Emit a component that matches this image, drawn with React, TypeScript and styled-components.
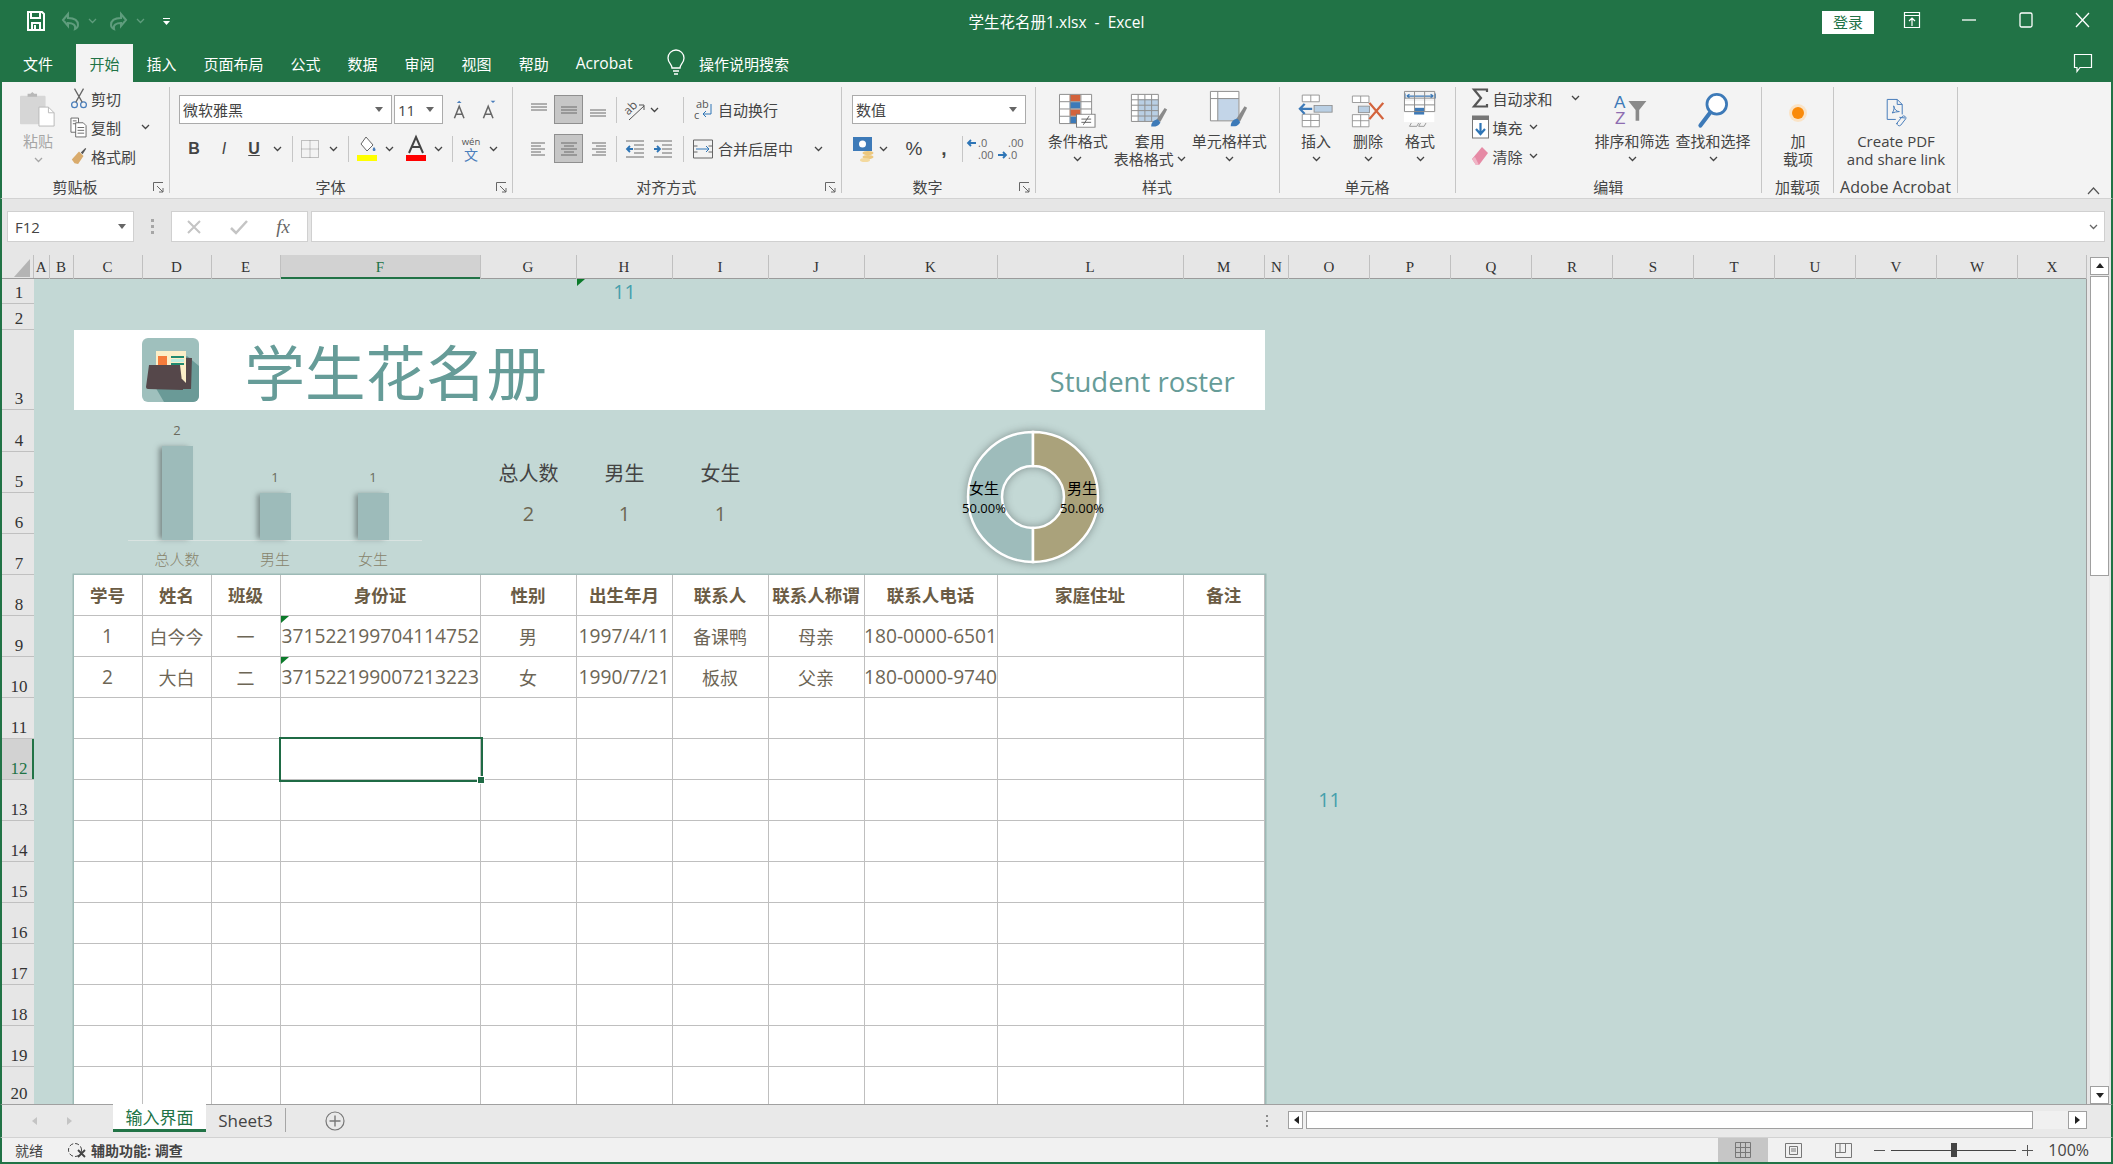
import React from 'react';
import styled, { createGlobalStyle } from 'styled-components';

const GREEN = '#217346';
const SHEET_BG = '#c3d8d5';
const INK = '#444444';

const COLS: [string, number][] = [
  ['A', 15.5], ['B', 24], ['C', 69], ['D', 69], ['E', 69], ['F', 200], ['G', 96], ['H', 96],
  ['I', 96], ['J', 96], ['K', 133], ['L', 186], ['M', 81.3], ['N', 24], ['O', 81.2], ['P', 81],
  ['Q', 81], ['R', 81], ['S', 81], ['T', 81], ['U', 81], ['V', 81], ['W', 81], ['X', 69],
];
const COL_TRACKS = COLS.map((c) => `${c[1]}px`).join(' ');
const TABLE_TRACKS = COLS.slice(2, 13).map((c) => `${c[1]}px`).join(' ');
const ROW_HEIGHTS = [25, 26, 80, 41.5, 41, 41, 41, 41, 41, 41, 41, 41, 41, 41, 41, 41, 41, 41, 41, 38];
const ROW_TRACKS = ROW_HEIGHTS.map((h) => `${h}px`).join(' ');

const TABLE_HEAD = ['学号', '姓名', '班级', '身份证', '性别', '出生年月', '联系人', '联系人称谓', '联系人电话', '家庭住址', '备注'];
const TABLE_ROWS = [
  ['1', '白今今', '一', '371522199704114752', '男', '1997/4/11', '备课鸭', '母亲', '180-0000-6501', '', ''],
  ['2', '大白', '二', '371522199007213223', '女', '1990/7/21', '板叔', '父亲', '180-0000-9740', '', ''],
];
const NUMERIC = /^[\d/-]+$/;

const GlobalStyle = createGlobalStyle`
  html, body {
    margin: 0;
    padding: 0;
    background: #f3f3f3;
  }
  body {
    font-family: "Open Sans", "Noto Sans CJK SC", sans-serif;
    overflow: hidden;
  }
  * { box-sizing: border-box; }
  svg { overflow: visible; display: block; }
`;

const Frame = styled.div`
  width: 2113px;
  height: 1164px;
  display: flex;
  flex-direction: column;
  overflow: hidden;
`;

/* title bar */
const TitleBar = styled.div`
  height: 44px;
  background: ${GREEN};
  display: grid;
  grid-template-columns: 1fr auto 1fr;
  align-items: center;
  color: #fff;
`;
const QuickAccess = styled.div`
  display: flex;
  align-items: center;
  padding-left: 26px;
  padding-bottom: 2px;
`;
const QatItem = styled.div<{ $ml: number }>`
  margin-left: ${({ $ml }) => $ml}px;
  display: flex;
`;
const DocTitle = styled.div`
  font-size: 15.5px;
  white-space: pre;
  padding-bottom: 2px;
`;
const WindowControls = styled.div`
  display: flex;
  justify-content: flex-end;
  align-items: center;
  padding-right: 2px;
`;
const LoginButton = styled.div`
  width: 52px;
  height: 23px;
  background: #fff;
  color: ${GREEN};
  font-size: 15px;
  line-height: 23px;
  text-align: center;
  margin-right: 9px;
`;
const WindowButton = styled.div`
  width: 57px;
  display: flex;
  justify-content: center;
  padding-bottom: 4px;
`;

/* ribbon tabs */
const TabBar = styled.div`
  height: 38px;
  background: ${GREEN};
  display: flex;
  align-items: stretch;
  color: #fff;
  font-size: 15px;
`;
const RibbonTab = styled.div<{ $active?: boolean; $file?: boolean }>`
  padding: 0 ${({ $file }) => ($file ? '23px' : '13.5px')};
  display: flex;
  align-items: center;
  background: ${({ $active }) => ($active ? '#f3f3f3' : 'transparent')};
  color: ${({ $active }) => ($active ? GREEN : '#fff')};
`;
const AcrobatTab = styled(RibbonTab)`
  font-size: 15.6px;
`;
const SearchTip = styled.div`
  display: flex;
  align-items: center;
  gap: 14px;
  margin-left: 21px;
`;
const CommentSlot = styled.div`
  margin-left: auto;
  width: 60px;
  display: flex;
  align-items: center;
  justify-content: center;
`;

/* ribbon */
const Ribbon = styled.div`
  height: 116px;
  background: #f3f3f3;
  border-left: 2px solid ${GREEN};
  border-right: 2px solid ${GREEN};
  padding-top: 5px;
  display: flex;
  position: relative;
  color: ${INK};
  font-size: 15px;
`;
const Group = styled.div<{ $w: number }>`
  width: ${({ $w }) => $w}px;
  height: 106px;
  border-right: 1px solid #c6c6c6;
  display: flex;
  flex-direction: column;
  flex: none;
`;
const GroupBody = styled.div<{ $pl?: number }>`
  height: 90px;
  display: flex;
  padding-left: ${({ $pl }) => $pl ?? 0}px;
`;
const GroupFoot = styled.div`
  height: 16px;
  display: flex;
`;
const GroupTitle = styled.div<{ $latin?: boolean }>`
  flex: 1;
  text-align: center;
  line-height: 20px;
  white-space: nowrap;
  font-size: ${({ $latin }) => ($latin ? '16px' : '15px')};
`;
const Launcher = styled.div`
  width: 21px;
  padding-top: 5px;
  padding-left: 5px;
`;
const PasteColumn = styled.div`
  width: 58px;
  margin-left: 7px;
  display: flex;
  flex-direction: column;
  align-items: center;
  color: #a6a6a6;
  padding-top: 3px;
`;
const PasteLabel = styled.div`
  margin-top: 2px;
  margin-bottom: 5px;
  line-height: 22px;
`;
const SmallColumn = styled.div<{ $w: number }>`
  width: ${({ $w }) => $w}px;
  display: flex;
  flex-direction: column;
  gap: 5px;
  flex: none;
  margin-top: -1px;
`;
const SmallButton = styled.div`
  height: 24px;
  display: flex;
  align-items: center;
  white-space: nowrap;
`;
const SmallIcon = styled.div`
  width: 23px;
  margin-right: 1px;
  display: flex;
  justify-content: center;
  flex: none;
`;
const Rows = styled.div<{ $pl: number }>`
  display: flex;
  flex-direction: column;
  gap: 10px;
  padding-top: 8px;
  padding-left: ${({ $pl }) => $pl}px;
`;
const ToolRow = styled.div`
  height: 29px;
  display: flex;
  align-items: center;
`;
const SelectBox = styled.div<{ $w: number; $ml?: number }>`
  width: ${({ $w }) => $w}px;
  height: 29px;
  margin-left: ${({ $ml }) => $ml ?? 0}px;
  background: #fff;
  border: 1px solid #ababab;
  display: flex;
  align-items: center;
  justify-content: space-between;
  padding: 0 8px 0 3px;
  font-size: 15px;
  flex: none;
`;
const Tool = styled.div<{ $w: number; $ml?: number; $active?: boolean }>`
  width: ${({ $w }) => $w}px;
  height: 29px;
  margin-left: ${({ $ml }) => $ml ?? 0}px;
  display: flex;
  align-items: center;
  justify-content: center;
  flex: none;
  background: ${({ $active }) => ($active ? '#c6c6c6' : 'transparent')};
  border: ${({ $active }) => ($active ? '1px solid #8f8f8f' : 'none')};
`;
const ToolGlyph = styled(Tool)<{ $bold?: boolean; $italic?: boolean; $under?: boolean; $big?: boolean }>`
  font-family: "Liberation Sans", sans-serif;
  font-size: ${({ $big }) => ($big ? '19px' : '16px')};
  font-weight: ${({ $bold, $under }) => ($bold || $under ? 700 : 400)};
  font-style: ${({ $italic }) => ($italic ? 'italic' : 'normal')};
  text-decoration: ${({ $under }) => ($under ? 'underline' : 'none')};
`;
const RowSep = styled.div<{ $ml: number; $mr: number }>`
  width: 1px;
  height: 26px;
  background: #c6c6c6;
  margin: 0 ${({ $mr }) => $mr}px 0 ${({ $ml }) => $ml}px;
  flex: none;
`;
const LabelledTool = styled.div`
  display: flex;
  align-items: center;
  gap: 5px;
  white-space: nowrap;
`;
const LargeButton = styled.div<{ $w: number }>`
  width: ${({ $w }) => $w}px;
  display: flex;
  flex-direction: column;
  align-items: center;
  flex: none;
`;
const LargeIcon = styled.div`
  height: 45px;
  padding-bottom: 4px;
  display: flex;
  align-items: flex-end;
  justify-content: center;
`;
const LargeLine = styled.div`
  height: 18px;
  line-height: 18px;
  display: flex;
  align-items: center;
  gap: 3px;
  white-space: nowrap;
`;
const CollapseArrow = styled.div`
  position: absolute;
  right: 11px;
  bottom: 3px;
`;

/* formula bar */
const FormulaBar = styled.div`
  height: 57px;
  background: #e6e6e6;
  border-left: 2px solid ${GREEN};
  border-right: 2px solid ${GREEN};
  border-top: 1px solid #d2d2d2;
  padding: 12px 6px 13px 5px;
  display: flex;
  align-items: stretch;
`;
const NameBox = styled.div`
  width: 127px;
  background: #fff;
  border: 1px solid #d0d0d0;
  display: flex;
  align-items: center;
  justify-content: space-between;
  padding: 0 7px;
  color: ${INK};
  font-size: 15px;
`;
const BarDots = styled.div`
  width: 37px;
  display: flex;
  flex-direction: column;
  align-items: center;
  justify-content: center;
  gap: 3px;
  i {
    width: 3px;
    height: 3px;
    background: #a6a6a6;
  }
`;
const FormulaTools = styled.div`
  width: 137px;
  background: #fff;
  border: 1px solid #d0d0d0;
  display: flex;
  align-items: center;
  justify-content: space-around;
  padding: 0 3px 0 0;
`;
const FormulaInput = styled.div`
  flex: 1;
  margin-left: 3px;
  background: #fff;
  border: 1px solid #d0d0d0;
  display: flex;
  align-items: center;
  justify-content: flex-end;
  padding-right: 6px;
`;

/* workspace */
const Workspace = styled.div`
  height: 849px;
  background: #e6e6e6;
  border-left: 2px solid ${GREEN};
  border-right: 2px solid ${GREEN};
  display: flex;
`;
const GridPane = styled.div`
  width: 2085px;
  display: flex;
  flex-direction: column;
`;
const HeaderStrip = styled.div`
  height: 24px;
  display: flex;
  border-bottom: 1px solid #9b9b9b;
  flex: none;
`;
const Corner = styled.div`
  width: 32px;
  display: flex;
  align-items: flex-end;
  justify-content: flex-end;
  padding: 0 3px 1px 0;
  border-right: 1px solid #c0c0c0;
`;
const ColumnHeaders = styled.div`
  display: grid;
  grid-template-columns: ${COL_TRACKS};
`;
const ColumnHeader = styled.div<{ $selected: boolean }>`
  font-family: "Liberation Serif", serif;
  font-size: 15px;
  line-height: 24px;
  text-align: center;
  color: ${({ $selected }) => ($selected ? GREEN : '#333')};
  border-right: 1px solid #c0c0c0;
  background: ${({ $selected }) => ($selected ? '#d2d2d2' : 'transparent')};
  box-shadow: ${({ $selected }) => ($selected ? `inset 0 -2px 0 ${GREEN}` : 'none')};
`;
const SheetArea = styled.div`
  display: flex;
  flex: 1;
  min-height: 0;
`;
const RowHeaders = styled.div`
  width: 32px;
  display: flex;
  flex-direction: column;
  overflow: hidden;
`;
const RowHeader = styled.div<{ $h: number; $selected: boolean }>`
  height: ${({ $h }) => $h}px;
  flex: none;
  font-family: "Liberation Serif", serif;
  font-size: 17px;
  line-height: 20px;
  display: flex;
  align-items: flex-end;
  justify-content: center;
  padding-left: 2px;
  color: ${({ $selected }) => ($selected ? GREEN : '#333')};
  border-bottom: 1px solid #c0c0c0;
  background: ${({ $selected }) => ($selected ? '#d2d2d2' : 'transparent')};
  box-shadow: ${({ $selected }) => ($selected ? `inset -2px 0 0 ${GREEN}` : 'none')};
`;
const Sheet = styled.div`
  width: 2053px;
  height: 825px;
  background: ${SHEET_BG};
  border-right: 1px solid #9f9f9f;
  display: grid;
  grid-template-columns: ${COL_TRACKS};
  grid-template-rows: ${ROW_TRACKS};
  overflow: hidden;
`;
const NoteNumber = styled.div<{ $col: number; $row: number }>`
  grid-column: ${({ $col }) => $col};
  grid-row: ${({ $row }) => $row};
  display: flex;
  align-items: center;
  justify-content: center;
  color: #45a0ac;
  font-size: 19.5px;
  line-height: 22px;
  position: relative;
`;
const CommentMark = styled.i`
  position: absolute;
  left: 0;
  top: 0;
  border-style: solid;
  border-width: 7px 8px 0 0;
  border-color: #0b7a2a transparent transparent transparent;
`;
const Banner = styled.div`
  grid-column: 3 / 14;
  grid-row: 3;
  background: #fff;
  display: flex;
  align-items: center;
  padding: 0 30px 0 68px;
  color: #669c98;
`;
const BannerTitle = styled.div`
  font-size: 60.5px;
  font-weight: 400;
  margin-left: 46px;
  white-space: nowrap;
`;
const BannerSub = styled.div`
  font-size: 27.5px;
  margin-left: auto;
  align-self: flex-end;
  padding-bottom: 3px;
  line-height: 50px;
  font-weight: 400;
`;
const StatLabel = styled.div<{ $col: number }>`
  grid-column: ${({ $col }) => $col};
  grid-row: 5;
  display: flex;
  align-items: center;
  justify-content: center;
  font-size: 20px;
  color: #444;
`;
const StatValue = styled(StatLabel)`
  grid-row: 6;
  color: #6d6753;
`;
const BarChart = styled.div`
  grid-column: 3 / 7;
  grid-row: 4 / 8;
  padding: 0 0 0 54.5px;
  display: flex;
  flex-direction: column;
`;
const Plot = styled.div`
  width: 294px;
  height: 131px;
  display: flex;
  border-bottom: 1px solid #d9e3e1;
`;
const PlotColumn = styled.div`
  flex: 1;
  display: flex;
  flex-direction: column;
  align-items: center;
  justify-content: flex-end;
`;
const BarValue = styled.div`
  font-size: 13px;
  line-height: 16px;
  padding-bottom: 8px;
  color: #6a6a5c;
`;
const Bar = styled.div<{ $h: number }>`
  width: 31px;
  height: ${({ $h }) => $h}px;
  background: #9dbbba;
  box-shadow: -4px 0 5px -1px rgba(70, 80, 80, 0.55);
`;
const AxisLabels = styled.div`
  width: 294px;
  display: flex;
  padding-top: 7px;
`;
const AxisLabel = styled.div`
  flex: 1;
  text-align: center;
  font-size: 15px;
  font-weight: 300;
  line-height: 22px;
  color: #87836b;
`;
const DonutSlot = styled.div`
  grid-column: 11 / 13;
  grid-row: 4 / 8;
  padding: 12px 0 0 78.5px;
`;
const DonutRings = styled.g`
  filter: drop-shadow(0 0 4px rgba(50, 60, 60, 0.45));
`;
const DonutText = styled.text`
  font-size: 15px;
  text-anchor: middle;
  fill: #000;
`;
const DonutPercent = styled(DonutText)`
  font-size: 13px;
`;
const RosterTable = styled.div`
  grid-column: 3 / 14;
  grid-row: 8 / 21;
  background: #fff;
  display: grid;
  grid-template-columns: ${TABLE_TRACKS};
  grid-auto-rows: 41px;
  box-shadow: 0 0 0 1.5px #9dbab6;
`;
const HeadCell = styled.div`
  border-right: 1px solid #bfbfbf;
  border-bottom: 1px solid #bfbfbf;
  display: flex;
  align-items: center;
  justify-content: center;
  font-size: 17.5px;
  font-weight: 700;
  color: #6b5c45;
  white-space: nowrap;
`;
const DataCell = styled.div<{ $flag?: boolean; $numeric?: boolean; $selected?: boolean }>`
  position: relative;
  border-right: 1px solid #bfbfbf;
  border-bottom: 1px solid #bfbfbf;
  display: flex;
  align-items: center;
  justify-content: ${({ $flag }) => ($flag ? 'flex-start' : 'center')};
  padding-left: ${({ $flag }) => ($flag ? '1px' : '0')};
  font-size: ${({ $numeric }) => ($numeric ? '19.2px' : '18px')};
  font-weight: 400;
  color: #6d6656;
  white-space: nowrap;
  outline: ${({ $selected }) => ($selected ? `2px solid #1f6b45` : 'none')};
  z-index: ${({ $selected }) => ($selected ? 2 : 0)};
`;
const FillHandle = styled.i`
  position: absolute;
  right: -4px;
  bottom: -4px;
  width: 6px;
  height: 6px;
  background: #1f6b45;
  outline: 1px solid #fff;
`;
const ScrollRail = styled.div`
  width: 19px;
  margin-left: 3px;
  padding-top: 2px;
  display: flex;
  flex-direction: column;
  background: linear-gradient(#e6e6e6 22px, #f0f0f0 22px);
  flex: none;
`;
const ScrollButton = styled.div`
  height: 18px;
  background: #fff;
  border: 1px solid #a0a0a0;
  display: flex;
  align-items: center;
  justify-content: center;
  flex: none;
`;
const VerticalThumb = styled.div`
  height: 300px;
  margin-top: 1px;
  background: #fff;
  border: 1px solid #a0a0a0;
`;
const RailSpacer = styled.div`
  flex: 1;
`;

/* sheet tabs */
const TabsBar = styled.div`
  height: 33px;
  background: #e9e9e9;
  border-left: 2px solid ${GREEN};
  border-right: 2px solid ${GREEN};
  border-top: 1px solid #a0a0a0;
  display: flex;
  align-items: flex-start;
  padding-right: 24px;
`;
const TabNav = styled.div`
  width: 111px;
  height: 31px;
  display: flex;
  align-items: center;
  gap: 24px;
  padding-left: 28px;
`;
const SheetTab = styled.div<{ $active?: boolean; $w: number }>`
  width: ${({ $w }) => $w}px;
  height: ${({ $active }) => ($active ? '28px' : '24px')};
  margin-top: ${({ $active }) => ($active ? '-1px' : '3px')};
  background: ${({ $active }) => ($active ? '#fff' : 'transparent')};
  color: ${({ $active }) => ($active ? '#217346' : '#444')};
  border-bottom: ${({ $active }) => ($active ? `3px solid ${GREEN}` : 'none')};
  border-right: ${({ $active }) => ($active ? 'none' : '1px solid #a6a6a6')};
  font-size: 17px;
  display: flex;
  align-items: center;
  justify-content: center;
  flex: none;
`;
const AddSheet = styled.div`
  margin-left: 39px;
  margin-top: 6px;
  display: flex;
`;
const TabDots = styled(BarDots)`
  width: 20px;
  height: 31px;
  margin-left: auto;
  i {
    width: 2px;
    height: 2px;
    background: #8c8c8c;
  }
`;
const HorizontalScroll = styled.div`
  display: flex;
  margin-top: 6px;
  width: 799px;
  margin-left: 11px;
  background: #f0f0f0;
`;
const HScrollButton = styled(ScrollButton)<{ $w: number }>`
  width: ${({ $w }) => $w}px;
`;
const HorizontalThumb = styled.div`
  width: 727px;
  margin-left: 3px;
  height: 18px;
  background: #fff;
  border: 1px solid #a0a0a0;
`;
const HGap = styled.div`
  flex: 1;
`;

/* status bar */
const StatusBar = styled.div`
  height: 27px;
  background: #f1f1f1;
  border-left: 2px solid ${GREEN};
  border-right: 2px solid ${GREEN};
  border-bottom: 2px solid ${GREEN};
  border-top: 1px solid #d2d2d2;
  display: flex;
  align-items: stretch;
  color: #444;
  font-size: 14px;
  padding-left: 13px;
`;
const StatusText = styled.div<{ $bold?: boolean; $ml?: number }>`
  display: flex;
  align-items: center;
  gap: 4px;
  font-weight: ${({ $bold }) => ($bold ? 700 : 400)};
  margin-left: ${({ $ml }) => $ml ?? 0}px;
`;
const ViewGroup = styled.div`
  margin-left: auto;
  display: flex;
`;
const ViewButton = styled.div<{ $active?: boolean }>`
  width: 50px;
  display: flex;
  align-items: center;
  justify-content: center;
  background: ${({ $active }) => ($active ? '#c6c6c6' : 'transparent')};
`;
const ZoomControl = styled.div`
  width: 159px;
  margin-left: 6px;
  display: flex;
  align-items: center;
  gap: 6px;
  color: #555;
`;
const ZoomSign = styled.div`
  width: 11px;
  height: 1px;
  background: #555;
  position: relative;
  flex: none;
`;
const ZoomPlus = styled(ZoomSign)`
  &::after {
    content: '';
    position: absolute;
    left: 5px;
    top: -5px;
    width: 1px;
    height: 11px;
    background: #555;
  }
`;
const ZoomTrack = styled.div`
  width: 125px;
  height: 1px;
  background: #444;
  position: relative;
  flex: none;
`;
const ZoomThumb = styled.i`
  position: absolute;
  left: 60px;
  top: -7px;
  width: 6px;
  height: 14px;
  background: #444;
`;
const ZoomValue = styled.div`
  width: 78px;
  text-align: right;
  padding-right: 22px;
  font-size: 16px;
  line-height: 25px;
`;

/* icons */
const Chev = ({ c = '#444' }: { c?: string }) => (
  <svg width="9" height="6" viewBox="0 0 9 6"><path d="M1 1l3.5 3.5L8 1" fill="none" stroke={c} strokeWidth="1.3" /></svg>
);
const Drop = () => (
  <svg width="8" height="5" viewBox="0 0 8 5"><path d="M0 0h8L4 5z" fill="#666" /></svg>
);
const LaunchIcon = () => (
  <svg width="11" height="11" viewBox="0 0 11 11"><path d="M.5 9V.5H10M4 4l6 6M10 6v4H6" fill="none" stroke="#666" /></svg>
);
const AlignLines = ({ lines }: { lines: [number, number, number][] }) => (
  <svg width="22" height="18" viewBox="0 0 22 18">
    {lines.map(([a, b, y]) => <path key={`${a}${y}`} d={`M${a} ${y}H${b}`} stroke="#6b6b6b" />)}
  </svg>
);
const SaveIcon = () => (
  <svg width="20" height="22" viewBox="0 0 20 22"><path d="M2 2h14l2 2v16H2zM5 2v6h9V2M6 20v-7h8v7M9 15v5" fill="none" stroke="#fff" strokeWidth="2" /></svg>
);
const UndoIcon = ({ flip }: { flip?: boolean }) => (
  <svg width="20" height="20" viewBox="0 0 20 20" style={flip ? { transform: 'scaleX(-1)' } : undefined}>
    <path d="M2 9l5-6v4c6 0 10 2 10 7 0 2-1 3-3 4 1-4-2-6-7-6v3z" fill="none" stroke="#5f9d7d" strokeWidth="2" />
  </svg>
);
const ScissorsIcon = () => (
  <svg width="18" height="23" viewBox="0 0 20 24">
    <circle cx="5" cy="19" r="3.2" fill="none" stroke="#4a7ebb" strokeWidth="1.4" />
    <circle cx="15" cy="19" r="3.2" fill="none" stroke="#4a7ebb" strokeWidth="1.4" />
    <path d="M6.500 16L15 1M13.500 16L5 1" stroke="#666" strokeWidth="1.4" />
  </svg>
);
const CopyIcon = () => (
  <svg width="17" height="21" viewBox="0 0 18 22" fill="#fff" stroke="#666">
    <path d="M1 1h8v15H1zM3 4h4M3 7h4" />
    <path d="M6 6h8l3 3v12H6zM8 11h7M8 14h7M8 17h7" />
  </svg>
);
const BrushIcon = () => (
  <svg width="18" height="20" viewBox="0 0 20 22">
    <path d="M2 15L10 6l5 5-6 9-4-1z" fill="#d9ab6c" />
    <path d="M12 7l5-5 1 1-4 6z" fill="#555" />
  </svg>
);
const PasteIcon = () => (
  <svg width="36" height="38" viewBox="0 0 38 38">
    <rect x="0" y="5" width="27" height="30" rx="1" fill="#d6d6d6" />
    <path d="M8 6V3h3l2-2 2 2h3v3z" fill="#b8b8b8" />
    <path d="M20 17h10l6 6v14H20z" fill="#fff" stroke="#b8b8b8" />
    <path d="M30 17v6h6" fill="none" stroke="#b8b8b8" />
  </svg>
);
const GrowFont = ({ up }: { up: boolean }) => (
  <svg width="16" height="21" viewBox="0 0 20 24">
    <path d="M3 23L9 8l6 15M5 18h8" fill="none" stroke="#666" strokeWidth="1.900" />
    <path d={up ? 'M6 4l3-3 3 3z' : 'M12 1h6l-3 3z'} fill="#4a7ebb" />
  </svg>
);
const BorderIcon = () => (
  <svg width="18" height="18" viewBox="0 0 18 18"><path d="M.5.5h17v17H.5zM9 .5v17M.5 9h17" fill="none" stroke="#8a8a8a" strokeDasharray="1 1" /></svg>
);
const FillIcon = () => (
  <svg width="22" height="26" viewBox="0 0 22 26">
    <path d="M10 1l7 8-6 6-6-7z" fill="#fff" stroke="#666" />
    <path d="M18 11c2 2 2 4 0 4-1.500 0-2-2 0-4z" fill="#4a7ebb" />
    <rect x="1" y="19" width="20" height="6" fill="#ffff00" />
  </svg>
);
const FontColorIcon = () => (
  <svg width="22" height="26" viewBox="0 0 22 26">
    <path d="M4 17L11 1l7 16M6.500 11h9" fill="none" stroke="#444" strokeWidth="2" />
    <rect x="1" y="19" width="20" height="6" fill="#ff0000" />
  </svg>
);
const PinyinIcon = () => (
  <svg width="26" height="36" viewBox="-2 -5 26 36">
    <text x="11" y="9" fontSize="9.500" textAnchor="middle" fill="#555">wén</text>
    <text x="11" y="24" fontSize="14" textAnchor="middle" fill="#4a7ebb">文</text>
  </svg>
);
const OrientIcon = () => (
  <svg width="32" height="32" viewBox="-4 -4 32 32">
    <text x="2" y="14" fontSize="12" fill="#555" transform="rotate(-45 8 12)">ab</text>
    <path d="M6 22L21 8M16 7h5v5" fill="none" stroke="#555" />
  </svg>
);
const IndentIcon = ({ right }: { right?: boolean }) => (
  <svg width="20" height="18" viewBox="0 0 20 18">
    <path d="M1 1h18M9 5h10M9 9h10M9 13h10M1 17h18" stroke="#6b6b6b" />
    <path d={right ? 'M1 9h5M4 6l3 3-3 3' : 'M8 9H2M5 6L2 9l3 3'} fill="none" stroke="#2e75b6" strokeWidth="1.800" />
  </svg>
);
const WrapIcon = () => (
  <svg width="20" height="32" viewBox="0 -4 20 32">
    <text x="3" y="10" fontSize="11" fill="#555">ab</text>
    <text x="1" y="21" fontSize="11" fill="#555">c</text>
    <path d="M18 6v10H10M13 13l-3 3 3 3" fill="none" stroke="#2e75b6" />
  </svg>
);
const MergeIcon = () => (
  <svg width="20" height="20" viewBox="0 0 20 20">
    <path d="M.5 1h19v18H.5zM.5 7h4M.5 13h4M15.500 7h4M15.500 13h4" fill="none" stroke="#666" />
    <path d="M3 10h13M13 7l3 3-3 3" fill="none" stroke="#2e75b6" />
  </svg>
);
const MoneyIcon = () => (
  <svg width="22" height="26" viewBox="0 0 22 26">
    <rect x="0" y="1" width="19" height="14" fill="#3d7ab8" />
    <circle cx="9.500" cy="8" r="3.500" fill="#fff" />
    <ellipse cx="15" cy="17" rx="5.500" ry="2" fill="#edc87e" />
    <ellipse cx="15" cy="21" rx="5.500" ry="2" fill="#edc87e" />
    <ellipse cx="12" cy="24" rx="5" ry="2" fill="#f3d99e" />
  </svg>
);
const DecimalIcon = ({ more }: { more?: boolean }) => (
  <svg width="30" height="32" viewBox="0 -4 30 32">
    <text x="12" y="10" fontSize="11" fill="#666">{more ? '.0' : '.00'}</text>
    <text x="12" y="22" fontSize="11" fill="#666">{more ? '.00' : '.0'}</text>
    <path d={more ? 'M10 6H2M5 3L2 6l3 3' : 'M2 18h8M7 15l3 3-3 3'} fill="none" stroke="#2e75b6" strokeWidth="1.800" />
  </svg>
);
const TableGrid = ({ w, h, cw, ch }: { w: number; h: number; cw: number; ch: number }) => {
  const lines: string[] = [];
  for (let x = 0.5; x <= w + 0.5; x += cw) lines.push(`M${x} .5V${h + 0.5}`);
  for (let y = 0.5; y <= h + 0.5; y += ch) lines.push(`M.5 ${y}H${w + 0.5}`);
  return <path d={lines.join('')} fill="none" stroke="#8f8f8f" vectorEffect="non-scaling-stroke" />;
};
const CondFormatIcon = () => (
  <svg width="37" height="34" viewBox="0 0 38 42" preserveAspectRatio="none">
    <rect width="34" height="36" fill="#fff" />
    <rect x="11" y="1" width="11" height="8" fill="#d3633c" />
    <rect x="11" y="10" width="11" height="8" fill="#3d7ab8" />
    <rect x="11" y="19" width="11" height="8" fill="#d3633c" />
    <rect x="11" y="28" width="11" height="8" fill="#3d7ab8" />
    <TableGrid w={33} h={36} cw={11} ch={9} />
    <rect x="18" y="25" width="19" height="16" fill="#fff" stroke="#777" />
    <path d="M25 38l6-11M23 31h10M23 35h10" stroke="#555" fill="none" />
  </svg>
);
const BrushOver = () => (
  <g>
    <path d="M30 34l10-16 3 2-8 16z" fill="#8a8a8a" />
    <path d="M24 42c0-6 4-9 8-9l3 4c-1 3-4 5-6 5z" fill="#3d7ab8" />
  </g>
);
const TableFormatIcon = () => (
  <svg width="37" height="34" viewBox="0 0 44 44" preserveAspectRatio="none">
    <rect width="33" height="35" fill="#fff" />
    <rect x="9" y="7" width="24" height="28" fill="#b9cfe4" />
    <TableGrid w={32} h={35} cw={8} ch={7} />
    <BrushOver />
  </svg>
);
const CellStyleIcon = () => (
  <svg width="38" height="37" viewBox="0 0 44 44" preserveAspectRatio="none">
    <rect width="33" height="35" fill="#fff" />
    <rect x="9" y="9" width="24" height="26" fill="#c3d5e8" />
    <path d="M.5.5h33v35H.5zM9 .5v35M.5 9h33" fill="none" stroke="#8f8f8f" vectorEffect="non-scaling-stroke" />
    <BrushOver />
  </svg>
);
const InsertIcon = () => (
  <svg width="36" height="35" viewBox="0 0 38 42" preserveAspectRatio="none">
    <path d="M4.500 2.500h18v8h-18zM13.500 2.500v8M4.500 25.500h18v15h-18zM13.500 25.500v15M4.500 33h18" fill="#fff" stroke="#8f8f8f" />
    <rect x="17" y="15" width="19" height="8" fill="#b9cfe4" stroke="#8f8f8f" />
    <path d="M15 19H2M7 13l-5 6 5 6" fill="none" stroke="#3d7ab8" strokeWidth="2.500" />
  </svg>
);
const DeleteIcon = () => (
  <svg width="35" height="34" viewBox="0 0 38 42" preserveAspectRatio="none">
    <path d="M1.500 2.500h18v8h-18zM10.500 2.500v8M1.500 25.500h18v15h-18zM10.500 25.500v15M1.500 33h18" fill="#fff" stroke="#8f8f8f" />
    <rect x="8" y="15" width="12" height="8" fill="#b9cfe4" stroke="#8f8f8f" />
    <path d="M20 11l15 20M35 11L20 31" stroke="#d3633c" strokeWidth="2.500" />
  </svg>
);
const FormatIcon = () => (
  <svg width="33" height="37" viewBox="0 0 36 44" preserveAspectRatio="none">
    <path d="M1 3v6M34 3v6M3 6h29M3 6l3-2M3 6l3 2M32 6l-3-2M32 6l-3 2" fill="none" stroke="#3d7ab8" strokeWidth="1.400" />
    <rect y="12" width="33" height="25" fill="#fff" />
    <rect x="11" y="20" width="11" height="8" fill="#3d7ab8" />
    <TableGrid w={33} h={24} cw={11} ch={8} />
    <path d="M8 38l-2 4h8l2-4M18 38l-2 4h6l2-4" fill="none" stroke="#8f8f8f" />
  </svg>
);
const SumIcon = () => (
  <svg width="16" height="20" viewBox="0 0 16 20"><path d="M15 4V1.500H2L9 10l-7 8.500h13V16" fill="none" stroke="#555" strokeWidth="2.200" /></svg>
);
const FillDownIcon = () => (
  <svg width="17" height="24" viewBox="0 0 17 24">
    <rect x=".5" y="1" width="16" height="22" fill="#fff" stroke="#777" />
    <rect x=".5" y="1" width="16" height="4" fill="#777" />
    <path d="M8.500 8v11M4 14l4.500 5L13 14" fill="none" stroke="#2e75b6" strokeWidth="2.200" />
  </svg>
);
const EraserIcon = () => (
  <svg width="18" height="20" viewBox="0 0 18 20">
    <path d="M1 13L11 1l6 6-9 12H5z" fill="#e68aa5" />
    <path d="M1 13l4 6h3l-4-8z" fill="#f0b5c6" />
  </svg>
);
const SortIcon = () => (
  <svg width="36" height="38" viewBox="0 -4 40 42">
    <text x="0" y="16" fontSize="19" fill="#3d7ab8" fontFamily="Liberation Sans">A</text>
    <text x="1" y="34" fontSize="19" fill="#8e6cb0" fontFamily="Liberation Sans">Z</text>
    <path d="M16 8h20l-8 10v12h-4V18z" fill="#8a8a8a" />
  </svg>
);
const FindIcon = () => (
  <svg width="35" height="36" viewBox="0 0 38 44">
    <circle cx="23" cy="15" r="12" fill="#fff" stroke="#3d7ab8" strokeWidth="3.400" />
    <path d="M15 25L3 41" stroke="#3d7ab8" strokeWidth="5" strokeLinecap="round" />
  </svg>
);
const AddinIcon = () => (
  <svg width="24" height="30" viewBox="0 0 24 30">
    <circle cx="12" cy="15" r="9" fill="#ffd9a8" opacity=".6" />
    <circle cx="12" cy="15" r="6" fill="#f98a0a" />
  </svg>
);
const AdobeIcon = () => (
  <svg width="27" height="30" viewBox="0 0 30 42" fill="none" stroke="#4a7ebb" strokeWidth="1.400">
    <path d="M2 2h14l7 7v14M2 2v28h12" />
    <path d="M16 2v7h7M9 21c3-4 3-8 2-10 1 5 4 8 8 8-4 0-7 1-10 2z" />
    <path d="M15 36l8-10a3 3 0 0 1 5 3l-7 9a3 3 0 0 1-5-3z" />
    <path d="M19 27l8 1" />
  </svg>
);
const RestoreIcon = () => (
  <svg width="18" height="18" viewBox="0 0 18 18"><path d="M1.500 1.500h15v15h-15zM1.500 4.500h15M9 15V8M6 10l3-3 3 3" fill="none" stroke="#fff" strokeWidth="1.200" /></svg>
);
const BulbIcon = () => (
  <svg width="18" height="26" viewBox="0 0 18 26"><path d="M5 18c0-4-4-5-4-10a8 8 0 0 1 16 0c0 5-4 6-4 10zM6 21h6M7 24h4" fill="none" stroke="#fff" strokeWidth="1.300" /></svg>
);
const CommentIcon = () => (
  <svg width="20" height="20" viewBox="0 0 20 20"><path d="M1.500 1.500h17v13H7l-3 4v-4H1.500z" fill="none" stroke="#fff" strokeWidth="1.200" /></svg>
);
const Tri = ({ d, c = '#222', s = 10 }: { d: string; c?: string; s?: number }) => (
  <svg width={s} height={s} viewBox="0 0 10 10"><path d={d} fill={c} /></svg>
);
const LogoIcon = () => (
  <svg width="57" height="64" viewBox="0 0 57 64">
    <rect width="57" height="64" rx="6" fill="#9fc0bd" />
    <path d="M8 40l14 24h29a6 6 0 0 0 6-6V28L45 18z" fill="#6a9a97" />
    <path d="M17 19l33 1-1 31H20z" fill="#55474a" />
    <path d="M14 13h30v32l-4-4H14z" fill="#fbeec8" />
    <rect x="16" y="18" width="9" height="9" fill="#f47b3b" />
    <path d="M29 18h13v2H29zM29 25h13v2H29z" fill="#1f8a70" />
    <rect x="29" y="21" width="13" height="3" fill="#bfeee0" />
    <path d="M7 28h31l3 25-35-1a2 2 0 0 1-2-2z" fill="#55474a" transform="translate(0 -1)" />
  </svg>
);
const FxMark = styled.span`
  font-family: "Liberation Serif", serif;
  font-style: italic;
  font-size: 19px;
  color: #666;
`;
const CrossIcon = () => (
  <svg width="16" height="16" viewBox="0 0 16 16"><path d="M2 2l12 12M14 2L2 14" stroke="#c4c4c4" strokeWidth="2" /></svg>
);
const CheckIcon = () => (
  <svg width="18" height="16" viewBox="0 0 18 16"><path d="M1 9l5 5L17 2" fill="none" stroke="#c4c4c4" strokeWidth="2.500" /></svg>
);
const AccessIcon = () => (
  <svg width="20" height="18" viewBox="0 0 20 18">
    <circle cx="8" cy="9" r="6.500" fill="none" stroke="#444" strokeDasharray="4 2" />
    <path d="M11 9l7 7M18 9l-7 7" stroke="#444" strokeWidth="1.800" />
  </svg>
);
const NormalViewIcon = () => (
  <svg width="16" height="16" viewBox="0 0 16 16"><path d="M.5.500h15v15H.5zM5.500.500v15M10.500.500v15M.5 5.500h15M.5 10.500h15" fill="none" stroke="#777" /></svg>
);
const PageViewIcon = () => (
  <svg width="17" height="15" viewBox="0 0 17 15"><path d="M.5.500h16v14H.5zM4.500 3.500h8v8h-8zM6 6h5M6 8h5" fill="none" stroke="#777" /></svg>
);
const BreakViewIcon = () => (
  <svg width="17" height="15" viewBox="0 0 17 15"><path d="M.5.500h16v14H.5zM.5 9.500h10V.500M5 .500v9" fill="none" stroke="#777" /></svg>
);

const Donut = () => (
  <svg width="180" height="150" viewBox="0 0 180 150">
    <DonutRings>
      <path d="M90 10A65 65 0 0 0 90 140L90 106A31 31 0 0 1 90 44Z" fill="#9ebcbb" stroke="#fff" strokeWidth="2.500" />
      <path d="M90 10A65 65 0 0 1 90 140L90 106A31 31 0 0 0 90 44Z" fill="#aaa27b" stroke="#fff" strokeWidth="2.500" />
    </DonutRings>
    <DonutText x="41" y="72">女生</DonutText>
    <DonutPercent x="41" y="91">50.00%</DonutPercent>
    <DonutText x="139" y="72">男生</DonutText>
    <DonutPercent x="139" y="91">50.00%</DonutPercent>
  </svg>
);

function ClipboardGroup() {
  return (
    <Group $w={168}>
      <GroupBody>
        <PasteColumn>
          <PasteIcon />
          <PasteLabel>粘贴</PasteLabel>
          <Chev c="#a6a6a6" />
        </PasteColumn>
        <SmallColumn $w={100}>
          <SmallButton><SmallIcon><ScissorsIcon /></SmallIcon>剪切</SmallButton>
          <SmallButton>
            <SmallIcon><CopyIcon /></SmallIcon>复制
            <Tool $w={9} $ml={20}><Chev /></Tool>
          </SmallButton>
          <SmallButton><SmallIcon><BrushIcon /></SmallIcon>格式刷</SmallButton>
        </SmallColumn>
      </GroupBody>
      <GroupFoot><GroupTitle>剪贴板</GroupTitle><Launcher><LaunchIcon /></Launcher></GroupFoot>
    </Group>
  );
}

function FontGroup() {
  return (
    <Group $w={343}>
      <GroupBody>
        <Rows $pl={9}>
          <ToolRow>
            <SelectBox $w={213}>微软雅黑<Drop /></SelectBox>
            <SelectBox $w={49} $ml={2}>11<Drop /></SelectBox>
            <Tool $w={24} $ml={5}><GrowFont up /></Tool>
            <Tool $w={24} $ml={5}><GrowFont up={false} /></Tool>
          </ToolRow>
          <ToolRow>
            <ToolGlyph $w={30} $bold>B</ToolGlyph>
            <ToolGlyph $w={30} $italic>I</ToolGlyph>
            <ToolGlyph $w={30} $under>U</ToolGlyph>
            <Tool $w={16}><Chev /></Tool>
            <RowSep $ml={7} $mr={7} />
            <Tool $w={20}><BorderIcon /></Tool>
            <Tool $w={16} $ml={5}><Chev /></Tool>
            <RowSep $ml={7} $mr={7} />
            <Tool $w={22}><FillIcon /></Tool>
            <Tool $w={16} $ml={3}><Chev /></Tool>
            <Tool $w={22} $ml={8}><FontColorIcon /></Tool>
            <Tool $w={16} $ml={3}><Chev /></Tool>
            <RowSep $ml={6} $mr={7} />
            <Tool $w={22}><PinyinIcon /></Tool>
            <Tool $w={16} $ml={3}><Chev /></Tool>
          </ToolRow>
        </Rows>
      </GroupBody>
      <GroupFoot><GroupTitle>字体</GroupTitle><Launcher><LaunchIcon /></Launcher></GroupFoot>
    </Group>
  );
}

const TOP = [[3, 19, 3], [3, 19, 6], [3, 19, 9]] as [number, number, number][];
const MID = [[3, 19, 6], [3, 19, 9], [3, 19, 12]] as [number, number, number][];
const BOT = [[3, 19, 9], [3, 19, 12], [3, 19, 15]] as [number, number, number][];
const L = [[3, 17, 3], [3, 13, 6], [3, 17, 9], [3, 13, 12], [3, 17, 15]] as [number, number, number][];
const C = [[3, 19, 3], [6, 16, 6], [3, 19, 9], [6, 16, 12], [3, 19, 15]] as [number, number, number][];
const R = [[5, 19, 3], [9, 19, 6], [5, 19, 9], [9, 19, 12], [5, 19, 15]] as [number, number, number][];

function AlignGroup() {
  return (
    <Group $w={328.5}>
      <GroupBody>
        <Rows $pl={11}>
          <ToolRow>
            <Tool $w={30}><AlignLines lines={TOP} /></Tool>
            <Tool $w={29} $active><AlignLines lines={MID} /></Tool>
            <Tool $w={30}><AlignLines lines={BOT} /></Tool>
            <RowSep $ml={3} $mr={4} />
            <Tool $w={28}><OrientIcon /></Tool>
            <Tool $w={10}><Chev /></Tool>
            <RowSep $ml={24} $mr={9} />
            <LabelledTool><WrapIcon />自动换行</LabelledTool>
          </ToolRow>
          <ToolRow>
            <Tool $w={30}><AlignLines lines={L} /></Tool>
            <Tool $w={29} $active><AlignLines lines={C} /></Tool>
            <Tool $w={30}><AlignLines lines={R} /></Tool>
            <RowSep $ml={3} $mr={4} />
            <Tool $w={28}><IndentIcon /></Tool>
            <Tool $w={28}><IndentIcon right /></Tool>
            <RowSep $ml={6} $mr={9} />
            <LabelledTool><MergeIcon />合并后居中<Tool $w={9} $ml={16}><Chev /></Tool></LabelledTool>
          </ToolRow>
        </Rows>
      </GroupBody>
      <GroupFoot><GroupTitle>对齐方式</GroupTitle><Launcher><LaunchIcon /></Launcher></GroupFoot>
    </Group>
  );
}

function NumberGroup() {
  return (
    <Group $w={194}>
      <GroupBody>
        <Rows $pl={10.5}>
          <ToolRow><SelectBox $w={174}>数值<Drop /></SelectBox></ToolRow>
          <ToolRow>
            <Tool $w={24}><MoneyIcon /></Tool>
            <Tool $w={14}><Chev /></Tool>
            <ToolGlyph $w={22} $ml={13} $big>%</ToolGlyph>
            <ToolGlyph $w={18} $ml={10} $bold $big>,</ToolGlyph>
            <RowSep $ml={9} $mr={5} />
            <Tool $w={26}><DecimalIcon more /></Tool>
            <Tool $w={26} $ml={4}><DecimalIcon /></Tool>
          </ToolRow>
        </Rows>
      </GroupBody>
      <GroupFoot><GroupTitle>数字</GroupTitle><Launcher><LaunchIcon /></Launcher></GroupFoot>
    </Group>
  );
}

function StylesGroup() {
  return (
    <Group $w={244}>
      <GroupBody $pl={6.3}>
        <LargeButton $w={72}>
          <LargeIcon><CondFormatIcon /></LargeIcon>
          <LargeLine>条件格式</LargeLine>
          <LargeLine><Chev /></LargeLine>
        </LargeButton>
        <LargeButton $w={72}>
          <LargeIcon><TableFormatIcon /></LargeIcon>
          <LargeLine>套用</LargeLine>
          <LargeLine>表格格式<Chev /></LargeLine>
        </LargeButton>
        <LargeButton $w={87}>
          <LargeIcon><CellStyleIcon /></LargeIcon>
          <LargeLine>单元格样式</LargeLine>
          <LargeLine><Chev /></LargeLine>
        </LargeButton>
      </GroupBody>
      <GroupFoot><GroupTitle>样式</GroupTitle></GroupFoot>
    </Group>
  );
}

function CellsGroup() {
  return (
    <Group $w={176}>
      <GroupBody $pl={10.5}>
        <LargeButton $w={52}>
          <LargeIcon><InsertIcon /></LargeIcon>
          <LargeLine>插入</LargeLine>
          <LargeLine><Chev /></LargeLine>
        </LargeButton>
        <LargeButton $w={52}>
          <LargeIcon><DeleteIcon /></LargeIcon>
          <LargeLine>删除</LargeLine>
          <LargeLine><Chev /></LargeLine>
        </LargeButton>
        <LargeButton $w={52}>
          <LargeIcon><FormatIcon /></LargeIcon>
          <LargeLine>格式</LargeLine>
          <LargeLine><Chev /></LargeLine>
        </LargeButton>
      </GroupBody>
      <GroupFoot><GroupTitle>单元格</GroupTitle></GroupFoot>
    </Group>
  );
}

function EditGroup() {
  return (
    <Group $w={306.5}>
      <GroupBody $pl={13}>
        <SmallColumn $w={123}>
          <SmallButton>
            <SmallIcon><SumIcon /></SmallIcon>自动求和
            <Tool $w={9} $ml={18}><Chev /></Tool>
          </SmallButton>
          <SmallButton>
            <SmallIcon><FillDownIcon /></SmallIcon>填充
            <Tool $w={9} $ml={6}><Chev /></Tool>
          </SmallButton>
          <SmallButton>
            <SmallIcon><EraserIcon /></SmallIcon>清除
            <Tool $w={9} $ml={6}><Chev /></Tool>
          </SmallButton>
        </SmallColumn>
        <LargeButton $w={81}>
          <LargeIcon><SortIcon /></LargeIcon>
          <LargeLine>排序和筛选</LargeLine>
          <LargeLine><Chev /></LargeLine>
        </LargeButton>
        <LargeButton $w={81}>
          <LargeIcon><FindIcon /></LargeIcon>
          <LargeLine>查找和选择</LargeLine>
          <LargeLine><Chev /></LargeLine>
        </LargeButton>
      </GroupBody>
      <GroupFoot><GroupTitle>编辑</GroupTitle></GroupFoot>
    </Group>
  );
}

function SheetGrid() {
  return (
    <Sheet>
      <NoteNumber $col={8} $row={1}><CommentMark />11</NoteNumber>
      <Banner>
        <LogoIcon />
        <BannerTitle>学生花名册</BannerTitle>
        <BannerSub>Student roster</BannerSub>
      </Banner>
      <BarChart>
        <Plot>
          <PlotColumn><BarValue>2</BarValue><Bar $h={94} /></PlotColumn>
          <PlotColumn><BarValue>1</BarValue><Bar $h={47} /></PlotColumn>
          <PlotColumn><BarValue>1</BarValue><Bar $h={47} /></PlotColumn>
        </Plot>
        <AxisLabels>
          <AxisLabel>总人数</AxisLabel>
          <AxisLabel>男生</AxisLabel>
          <AxisLabel>女生</AxisLabel>
        </AxisLabels>
      </BarChart>
      <StatLabel $col={7}>总人数</StatLabel>
      <StatLabel $col={8}>男生</StatLabel>
      <StatLabel $col={9}>女生</StatLabel>
      <StatValue $col={7}>2</StatValue>
      <StatValue $col={8}>1</StatValue>
      <StatValue $col={9}>1</StatValue>
      <DonutSlot><Donut /></DonutSlot>
      <RosterTable>
        {TABLE_HEAD.map((h) => <HeadCell key={h}>{h}</HeadCell>)}
        {Array.from({ length: 12 }).flatMap((_, r) =>
          TABLE_HEAD.map((_h, c) => {
            const text = TABLE_ROWS[r]?.[c] ?? '';
            const flag = c === 3 && text !== '';
            const selected = r === 3 && c === 3;
            return (
              <DataCell key={`${r}-${c}`} $flag={flag} $numeric={NUMERIC.test(text)} $selected={selected}>
                {flag && <CommentMark />}
                {text}
                {selected && <FillHandle />}
              </DataCell>
            );
          })
        )}
      </RosterTable>
      <NoteNumber $col={15} $row={13}>11</NoteNumber>
    </Sheet>
  );
}

export default function App() {
  return (
    <Frame>
      <GlobalStyle />
      <TitleBar>
        <QuickAccess>
          <SaveIcon />
          <QatItem $ml={15}><UndoIcon /></QatItem>
          <QatItem $ml={7}><Chev c="#5f9d7d" /></QatItem>
          <QatItem $ml={11}><UndoIcon flip /></QatItem>
          <QatItem $ml={8}><Chev c="#5f9d7d" /></QatItem>
          <QatItem $ml={17}>
            <svg width="9" height="9" viewBox="0 0 9 9"><path d="M1 1.500h7" stroke="#fff" /><path d="M1 4h7L4.500 8z" fill="#fff" /></svg>
          </QatItem>
        </QuickAccess>
        <DocTitle>学生花名册1.xlsx  -  Excel</DocTitle>
        <WindowControls>
          <LoginButton>登录</LoginButton>
          <WindowButton><RestoreIcon /></WindowButton>
          <WindowButton>
            <svg width="14" height="14" viewBox="0 0 14 14"><path d="M0 7h14" stroke="#fff" strokeWidth="1.300" /></svg>
          </WindowButton>
          <WindowButton>
            <svg width="14" height="16" viewBox="0 0 14 16"><rect x="1" y="1" width="12" height="14" rx="1.500" fill="none" stroke="#fff" strokeWidth="1.300" /></svg>
          </WindowButton>
          <WindowButton>
            <svg width="15" height="16" viewBox="0 0 15 16"><path d="M1 1l13 14M14 1L1 15" stroke="#fff" strokeWidth="1.300" /></svg>
          </WindowButton>
        </WindowControls>
      </TitleBar>
      <TabBar>
        <RibbonTab $file>文件</RibbonTab>
        <RibbonTab $active>开始</RibbonTab>
        <RibbonTab>插入</RibbonTab>
        <RibbonTab>页面布局</RibbonTab>
        <RibbonTab>公式</RibbonTab>
        <RibbonTab>数据</RibbonTab>
        <RibbonTab>审阅</RibbonTab>
        <RibbonTab>视图</RibbonTab>
        <RibbonTab>帮助</RibbonTab>
        <AcrobatTab>Acrobat</AcrobatTab>
        <SearchTip><BulbIcon />操作说明搜索</SearchTip>
        <CommentSlot><CommentIcon /></CommentSlot>
      </TabBar>
      <Ribbon>
        <ClipboardGroup />
        <FontGroup />
        <AlignGroup />
        <NumberGroup />
        <StylesGroup />
        <CellsGroup />
        <EditGroup />
        <Group $w={72}>
          <GroupBody>
            <LargeButton $w={72}>
              <LargeIcon><AddinIcon /></LargeIcon>
              <LargeLine>加</LargeLine>
              <LargeLine>载项</LargeLine>
            </LargeButton>
          </GroupBody>
          <GroupFoot><GroupTitle>加载项</GroupTitle></GroupFoot>
        </Group>
        <Group $w={124}>
          <GroupBody>
            <LargeButton $w={124}>
              <LargeIcon><AdobeIcon /></LargeIcon>
              <LargeLine>Create PDF</LargeLine>
              <LargeLine>and share link</LargeLine>
            </LargeButton>
          </GroupBody>
          <GroupFoot><GroupTitle $latin>Adobe Acrobat</GroupTitle></GroupFoot>
        </Group>
        <CollapseArrow>
          <svg width="13" height="8" viewBox="0 0 13 8"><path d="M1 7l5.500-6L12 7" fill="none" stroke="#555" strokeWidth="1.200" /></svg>
        </CollapseArrow>
      </Ribbon>
      <FormulaBar>
        <NameBox>F12<Drop /></NameBox>
        <BarDots><i /><i /><i /></BarDots>
        <FormulaTools><CrossIcon /><CheckIcon /><FxMark>fx</FxMark></FormulaTools>
        <FormulaInput><Chev c="#666" /></FormulaInput>
      </FormulaBar>
      <Workspace>
        <GridPane>
          <HeaderStrip>
            <Corner>
              <svg width="16" height="18" viewBox="0 0 16 18"><path d="M16 0v18H0z" fill="#b4b4b4" /></svg>
            </Corner>
            <ColumnHeaders>
              {COLS.map(([name]) => <ColumnHeader key={name} $selected={name === 'F'}>{name}</ColumnHeader>)}
            </ColumnHeaders>
          </HeaderStrip>
          <SheetArea>
            <RowHeaders>
              {ROW_HEIGHTS.map((h, i) => <RowHeader key={i} $h={h} $selected={i === 11}>{i + 1}</RowHeader>)}
            </RowHeaders>
            <SheetGrid />
          </SheetArea>
        </GridPane>
        <ScrollRail>
          <ScrollButton><Tri d="M5 2l4 5H1z" /></ScrollButton>
          <VerticalThumb />
          <RailSpacer />
          <ScrollButton><Tri d="M1 3h8L5 8z" /></ScrollButton>
        </ScrollRail>
      </Workspace>
      <TabsBar>
        <TabNav>
          <Tri d="M7 1v8L2 5z" c="#c4c4c4" />
          <Tri d="M3 1v8l5-4z" c="#c4c4c4" />
        </TabNav>
        <SheetTab $active $w={93}>输入界面</SheetTab>
        <SheetTab $w={80}>Sheet3</SheetTab>
        <AddSheet>
          <svg width="20" height="20" viewBox="0 0 20 20"><circle cx="10" cy="10" r="9" fill="none" stroke="#777" strokeWidth="1.200" /><path d="M10 4.500v11M4.500 10h11" stroke="#777" strokeWidth="1.400" /></svg>
        </AddSheet>
        <TabDots><i /><i /><i /></TabDots>
        <HorizontalScroll>
          <HScrollButton $w={15}><Tri d="M8 1v8L3 5z" /></HScrollButton>
          <HorizontalThumb />
          <HGap />
          <HScrollButton $w={19}><Tri d="M2 1v8l5-4z" /></HScrollButton>
        </HorizontalScroll>
      </TabsBar>
      <StatusBar>
        <StatusText>就绪</StatusText>
        <StatusText $bold $ml={24}><AccessIcon />辅助功能: 调查</StatusText>
        <ViewGroup>
          <ViewButton $active><NormalViewIcon /></ViewButton>
          <ViewButton><PageViewIcon /></ViewButton>
          <ViewButton><BreakViewIcon /></ViewButton>
        </ViewGroup>
        <ZoomControl>
          <ZoomSign />
          <ZoomTrack><ZoomThumb /></ZoomTrack>
          <ZoomPlus />
        </ZoomControl>
        <ZoomValue>100%</ZoomValue>
      </StatusBar>
    </Frame>
  );
}
